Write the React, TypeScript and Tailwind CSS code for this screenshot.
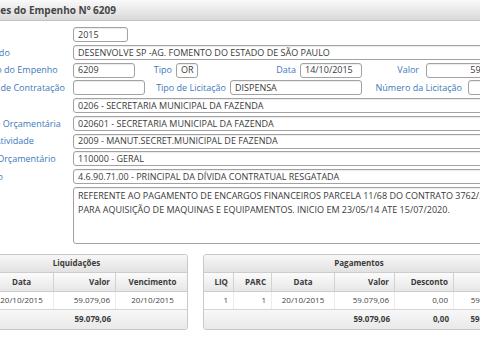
import React from "react";

const labelCls = "whitespace-nowrap text-[9px] text-[#4079bb]";
const boxCls =
  "h-[15px] shrink-0 border border-[#a2a2a2] rounded-[3px] px-[4px] text-[9px] text-[#3a3a3a] flex items-center whitespace-nowrap overflow-hidden shadow-[inset_0_1px_1px_rgba(0,0,0,0.08)]";

function Label({ text, shift }: { text: string; shift: string }) {
  return (
    <div className="w-[73px] shrink-0 h-[15px] overflow-hidden flex items-center">
      <span className={`${labelCls} ${shift}`}>{text}</span>
    </div>
  );
}

function WideRow({ label, shift, value }: { label: string; shift: string; value: string }) {
  return (
    <div className="flex items-center h-[15px]">
      <Label text={label} shift={shift} />
      <div className={`${boxCls} w-[460px]`}>{value}</div>
    </div>
  );
}

export default function App() {
  return (
    <div className="w-[480px] h-[340px] overflow-hidden bg-white font-['Open_Sans',sans-serif]">
      {/* Header */}
      <div className="h-[21px] flex items-center overflow-hidden bg-gradient-to-b from-[#fafafa] to-[#d9d9d9] border-b border-[#c2c2c2]">
        <span className="-ml-[33px] whitespace-nowrap text-[10px] font-bold text-[#464646]">
          Detalhes do Empenho Nº 6209
        </span>
      </div>

      {/* Form */}
      <div className="pt-[6px] flex flex-col gap-[2.75px]">
        <div className="flex items-center h-[15px]">
          <Label text="Exercício" shift="-ml-[52px]" />
          <div className={`${boxCls} w-[55px]`}>2015</div>
        </div>

        <WideRow label="Favorecido" shift="-ml-[36px]" value="DESENVOLVE SP -AG. FOMENTO DO ESTADO DE SÃO PAULO" />

        <div className="flex items-center h-[15px]">
          <Label text="Número do Empenho" shift="-ml-[33px]" />
          <div className={`${boxCls} w-[62px]`}>6209</div>
          <div className={`${labelCls} w-[41px] shrink-0 text-right pr-[4px]`}>Tipo</div>
          <div className={`${boxCls} w-[22px]`}>OR</div>
          <div className={`${labelCls} w-[102px] shrink-0 text-right pr-[4px]`}>Data</div>
          <div className={`${boxCls} w-[62px]`}>14/10/2015</div>
          <div className={`${labelCls} w-[64px] shrink-0 text-right pr-[7px]`}>Valor</div>
          <div className={`${boxCls} w-[90px] justify-end`}>59.079,06</div>
        </div>

        <div className="flex items-center h-[15px]">
          <Label text="Tipo de Contratação" shift="-ml-[20px]" />
          <div className={`${boxCls} w-[72px]`}></div>
          <div className={`${labelCls} w-[85px] shrink-0 text-right pr-[4px]`}>Tipo de Licitação</div>
          <div className={`${boxCls} w-[132px]`}>DISPENSA</div>
          <div className={`${labelCls} w-[106px] shrink-0 text-right pr-[6px]`}>Número da Licitação</div>
          <div className={`${boxCls} w-[60px]`}></div>
        </div>

        <WideRow label="Órgão" shift="-ml-[38px]" value="0206 - SECRETARIA MUNICIPAL DA FAZENDA" />
        <WideRow label="Unidade Orçamentária" shift="-ml-[35px]" value="020601 - SECRETARIA MUNICIPAL DA FAZENDA" />
        <WideRow label="Projeto/Atividade" shift="-ml-[39px]" value="2009 - MANUT.SECRET.MUNICIPAL DE FAZENDA" />
        <WideRow label="Recurso Orçamentário" shift="-ml-[39px]" value="110000 - GERAL" />
        <WideRow label="Elemento" shift="-ml-[37px]" value="4.6.90.71.00 - PRINCIPAL DA DÍVIDA CONTRATUAL RESGATADA" />

        <div className="flex items-start h-[57px]">
          <Label text="Histórico" shift="-ml-[44px]" />
          <div className="w-[460px] h-[57px] shrink-0 border border-[#a2a2a2] rounded-[3px] px-[4px] pt-[1px] text-[9px] leading-[14px] text-[#3a3a3a] overflow-hidden whitespace-nowrap shadow-[inset_0_1px_1px_rgba(0,0,0,0.08)]">
            <div>REFERENTE AO PAGAMENTO DE ENCARGOS FINANCEIROS PARCELA 11/68 DO CONTRATO 3762/2014</div>
            <div>PARA AQUISIÇÃO DE MAQUINAS E EQUIPAMENTOS. INICIO EM 23/05/14 ATE 15/07/2020.</div>
          </div>
        </div>
      </div>

      {/* Tables */}
      <div className="mt-[10px] flex items-start">
        <div className="-ml-[35px] w-[223px] shrink-0 border border-[#c8c8c8] rounded-[3px] overflow-hidden text-[8px] text-[#444]">
          <div className="h-[18px] flex items-center justify-center font-bold text-[#3a3a3a] bg-gradient-to-b from-[#f7f7f7] to-[#e2e2e2] border-b border-[#cdcdcd]">
            Liquidações
          </div>
          <div className="h-[19px] grid grid-cols-[24px_64px_62px_73px] font-bold text-[#3a3a3a] bg-gradient-to-b from-[#fbfbfb] to-[#e7e7e7] border-b border-[#cdcdcd]">
            <div className="flex items-center justify-center border-r border-[#d2d2d2]">Nº</div>
            <div className="flex items-center justify-center border-r border-[#d2d2d2]">Data</div>
            <div className="flex items-center justify-end pr-[5px] border-r border-[#d2d2d2]">Valor</div>
            <div className="flex items-center justify-center">Vencimento</div>
          </div>
          <div className="h-[18px] grid grid-cols-[24px_64px_62px_73px] bg-white border-b border-[#d5d5d5]">
            <div className="flex items-center justify-center border-r border-[#ececec]">1</div>
            <div className="flex items-center justify-center border-r border-[#ececec]">20/10/2015</div>
            <div className="flex items-center justify-end pr-[5px] border-r border-[#ececec]">59.079,06</div>
            <div className="flex items-center justify-center">20/10/2015</div>
          </div>
          <div className="h-[19px] grid grid-cols-[24px_64px_62px_73px] font-bold text-[#3a3a3a] bg-gradient-to-b from-[#f8f8f8] to-[#e9e9e9]">
            <div />
            <div />
            <div className="flex items-center justify-end pr-[5px]">59.079,06</div>
            <div />
          </div>
        </div>

        <div className="ml-[15px] w-[312px] shrink-0 border border-[#c8c8c8] rounded-[3px] overflow-hidden text-[8px] text-[#444]">
          <div className="h-[18px] flex items-center justify-center font-bold text-[#3a3a3a] bg-gradient-to-b from-[#f7f7f7] to-[#e2e2e2] border-b border-[#cdcdcd]">
            Pagamentos
          </div>
          <div className="h-[19px] grid grid-cols-[30px_38px_63px_60px_59px_62px] font-bold text-[#3a3a3a] bg-gradient-to-b from-[#fbfbfb] to-[#e7e7e7] border-b border-[#cdcdcd]">
            <div className="flex items-center justify-end pr-[5px] border-r border-[#d2d2d2]">LIQ</div>
            <div className="flex items-center justify-end pr-[5px] border-r border-[#d2d2d2]">PARC</div>
            <div className="flex items-center justify-center border-r border-[#d2d2d2]">Data</div>
            <div className="flex items-center justify-end pr-[5px] border-r border-[#d2d2d2]">Valor</div>
            <div className="flex items-center justify-end pr-[5px] border-r border-[#d2d2d2]">Desconto</div>
            <div className="flex items-center justify-end pr-[1px]">Líquido</div>
          </div>
          <div className="h-[18px] grid grid-cols-[30px_38px_63px_60px_59px_62px] bg-white border-b border-[#d5d5d5]">
            <div className="flex items-center justify-end pr-[5px] border-r border-[#ececec]">1</div>
            <div className="flex items-center justify-end pr-[5px] border-r border-[#ececec]">1</div>
            <div className="flex items-center justify-center border-r border-[#ececec]">20/10/2015</div>
            <div className="flex items-center justify-end pr-[5px] border-r border-[#ececec]">59.079,06</div>
            <div className="flex items-center justify-end pr-[5px] border-r border-[#ececec]">0,00</div>
            <div className="flex items-center justify-end pr-[9px]">59.079,06</div>
          </div>
          <div className="h-[19px] grid grid-cols-[30px_38px_63px_60px_59px_62px] font-bold text-[#3a3a3a] bg-gradient-to-b from-[#f8f8f8] to-[#e9e9e9]">
            <div />
            <div />
            <div />
            <div className="flex items-center justify-end pr-[5px]">59.079,06</div>
            <div className="flex items-center justify-end pr-[5px]">0,00</div>
            <div className="flex items-center justify-end pr-[9px]">59.079,06</div>
          </div>
        </div>
      </div>
    </div>
  );
}
